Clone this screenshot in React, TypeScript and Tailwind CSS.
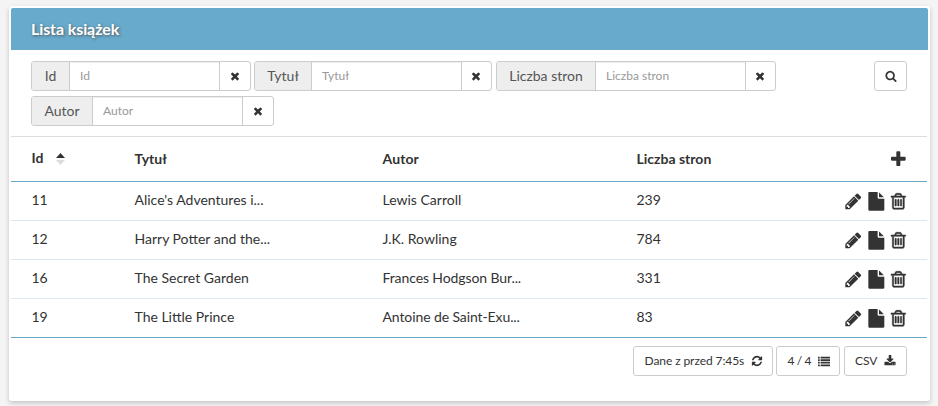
import React from "react";

const PATHS = {
  times:
    "M1490 1322q0 40-28 68l-136 136q-28 28-68 28t-68-28l-294-294-294 294q-28 28-68 28t-68-28l-136-136q-28-28-28-68t28-68l294-294-294-294q-28-28-28-68t28-68l136-136q28-28 68-28t68 28l294 294 294-294q28-28 68-28t68 28l136 136q28 28 28 68t-28 68l-294 294 294 294q28 28 28 68z",
  search:
    "M1216 832q0-185-131.5-316.5t-316.5-131.5-316.5 131.5-131.5 316.5 131.5 316.5 316.5 131.5 316.5-131.5 131.5-316.5zm512 832q0 52-38 90t-90 38q-54 0-90-38l-343-342q-179 124-399 124-143 0-273.5-55.5t-225-150-150-225-55.5-273.5 55.5-273.5 150-225 225-150 273.5-55.5 273.5 55.5 225 150 150 225 55.5 273.5q0 220-124 399l343 343q37 37 37 90z",
  plus: "M1600 736v192q0 40-28 68t-68 28h-416v416q0 40-28 68t-68 28h-192q-40 0-68-28t-28-68v-416h-416q-40 0-68-28t-28-68v-192q0-40 28-68t68-28h416v-416q0-40 28-68t68-28h192q40 0 68 28t28 68v416h416q40 0 68 28t28 68z",
  pencil:
    "M491 1536l91-91-235-235-91 91v107h128v128h107zm523-928q0-22-22-22-10 0-17 7l-542 542q-7 7-7 17 0 22 22 22 10 0 17-7l542-542q7-7 7-17zm-54-192l416 416-832 832h-416v-416zm683 96q0 53-37 90l-166 166-416-416 166-165q36-38 90-38 53 0 91 38l235 234q37 39 37 91z",
  file: "M1152 512v-472q22 14 36 28l408 408q14 14 28 36h-472zm-128 32q0 40 28 68t68 28h544v1056q0 40-28 68t-68 28h-1344q-40 0-68-28t-28-68v-1600q0-40 28-68t68-28h800v544z",
  trash:
    "M704 736v576q0 14-9 23t-23 9h-64q-14 0-23-9t-9-23v-576q0-14 9-23t23-9h64q14 0 23 9t9 23zm256 0v576q0 14-9 23t-23 9h-64q-14 0-23-9t-9-23v-576q0-14 9-23t23-9h64q14 0 23 9t9 23zm256 0v576q0 14-9 23t-23 9h-64q-14 0-23-9t-9-23v-576q0-14 9-23t23-9h64q14 0 23 9t9 23zm128 724v-948h-896v948q0 22 7 40.5t14.5 27 10.5 8.5h832q3 0 10.5-8.5t14.5-27 7-40.5zm-672-1076h448l-48-117q-7-9-17-11h-317q-10 2-17 11zm928 32v64q0 14-9 23t-23 9h-96v948q0 83-47 143.5t-113 60.5h-832q-66 0-113-58.5t-47-141.5v-952h-96q-14 0-23-9t-9-23v-64q0-14 9-23t23-9h309l70-167q15-37 54-63t79-26h320q40 0 79 26t54 63l70 167h309q14 0 23 9t9 23z",
  refresh:
    "M1639 1056q0 5-1 7-64 268-268 434.5t-478 166.5q-146 0-282.5-55t-243.5-157l-129 129q-19 19-45 19t-45-19-19-45v-448q0-26 19-45t45-19h448q26 0 45 19t19 45-19 45l-137 137q71 66 161 102t187 36q134 0 250-65t186-179q11-17 53-117 8-23 30-23h192q13 0 22.5 9.5t9.5 22.5zm25-800v448q0 26-19 45t-45 19h-448q-26 0-45-19t-19-45 19-45l138-138q-148-137-349-137-134 0-250 65t-186 179q-11 17-53 117-8 23-30 23h-199q-13 0-22.5-9.5t-9.5-22.5v-7q65-268 270-434.5t480-166.5q146 0 284 55.5t245 156.5l130-129q19-19 45-19t45 19 19 45z",
  list: "M0 256h256v256h-256zM384 256h1408v256h-1408zM0 640h256v256h-256zM384 640h1408v256h-1408zM0 1024h256v256h-256zM384 1024h1408v256h-1408zM0 1408h256v256h-256zM384 1408h1408v256h-1408z",
  download:
    "M1344 1344q0-26-19-45t-45-19-45 19-19 45 19 45 45 19 45-19 19-45zm256 0q0-26-19-45t-45-19-45 19-19 45 19 45 45 19 45-19 19-45zm128-224v320q0 40-28 68t-68 28h-1472q-40 0-68-28t-28-68v-320q0-40 28-68t68-28h465l135 136q58 56 136 56t136-56l136-136h464q40 0 68 28t28 68zm-325-569q17 41-14 70l-448 448q-18 19-45 19t-45-19l-448-448q-31-29-14-70 17-39 59-39h256v-448q0-26 19-45t45-19h256q26 0 45 19t19 45v448h256q42 0 59 39z",
};

function Icon({ name, className }: { name: keyof typeof PATHS; className: string }) {
  return (
    <svg viewBox="0 0 1792 1792" fill="currentColor" className={`shrink-0 overflow-visible ${className}`}>
      <path d={PATHS[name]} />
    </svg>
  );
}

function Filter({ label, className, clearWidth }: { label: string; className: string; clearWidth: string }) {
  return (
    <div className={`flex h-[30px] rounded-[3px] border border-[#ccc] ${className}`}>
      <span className="flex flex-1 items-center justify-center rounded-l-[2px] bg-[#eee] text-sm text-[#555]">
        {label}
      </span>
      <input
        placeholder={label}
        className="w-[151px] border-x border-[#ccc] px-[10px] text-xs text-[#555] shadow-[inset_0_1px_1px_rgba(0,0,0,0.075)] outline-none placeholder:text-[#999]"
      />
      <button className={`flex items-center justify-center ${clearWidth}`}>
        <Icon name="times" className="mr-px size-3" />
      </button>
    </div>
  );
}

function Button({ children, className }: { children: React.ReactNode; className: string }) {
  return (
    <button
      className={`flex h-[30px] items-center rounded-[3px] border border-[#ccc] text-xs ${className}`}
    >
      {children}
    </button>
  );
}

const BOOKS = [
  ["11", "Alice's Adventures i...", "Lewis Carroll", "239"],
  ["12", "Harry Potter and the...", "J.K. Rowling", "784"],
  ["16", "The Secret Garden", "Frances Hodgson Bur...", "331"],
  ["19", "The Little Prince", "Antoine de Saint-Exu...", "83"],
];

const COLUMNS = "grid grid-cols-[103px_248px_254px_1fr_auto] items-center pl-[20.5px] pr-[19px]";

export default function App() {
  return (
    <div className="h-[406px] w-[938px] overflow-hidden bg-[#f4f4f4] pl-[9px] pt-[6px] font-['Lato',sans-serif] text-sm text-[#333]">
      <div className="h-[395px] w-[921px] rounded-[3px] border-2 border-white bg-white shadow-[0_2px_5px_rgba(0,0,0,0.2)]">
        <header className="flex h-[42px] items-center rounded-t-[2px] bg-[#67aacc] pl-5 text-base font-bold tracking-[-0.1px] text-white [text-shadow:1px_1px_3px_#555]">
          Lista książek
        </header>
        <div className="mr-px flex h-[87px] justify-between border-b border-[#ddd] pl-5 pr-[20px] pt-[11px]">
          <div className="flex w-[760px] flex-wrap content-start gap-y-[5px]">
            <Filter label="Id" className="mr-[3px] w-[220px]" clearWidth="w-[30px]" />
            <Filter label="Tytuł" className="mr-1 w-[238px]" clearWidth="w-[29px]" />
            <Filter label="Liczba stron" className="w-[280px]" clearWidth="w-[29px]" />
            <Filter label="Autor" className="w-[243px]" clearWidth="w-[30px]" />
          </div>
          <Button className="w-[33px] justify-center">
            <Icon name="search" className="size-3" />
          </Button>
        </div>
        <div className="mr-px">
          <div className={`${COLUMNS} h-[45px] border-b border-[#67a9c4] font-bold`}>
            <span className="flex items-center pb-0.5">
              Id
              <svg viewBox="0 0 9 12" className="ml-[13px] mt-0.5 h-3 w-[9px]">
                <path d="M0 5 4.5 0 9 5z" fill="#333" />
                <path d="M0 7h9l-4.5 5z" fill="#ddd" />
              </svg>
            </span>
            <span>Tytuł</span>
            <span className="tracking-[0.1px]">Autor</span>
            <span>Liczba stron</span>
            <Icon name="plus" className="size-[18.67px]" />
          </div>
          {BOOKS.map(([id, title, author, pages], i) => (
            <div
              key={id}
              className={`${COLUMNS} h-[39px] border-b ${i === BOOKS.length - 1 ? "border-[#67a9c4]" : "border-[#d9e8f1]"}`}
            >
              <span className="pb-0.5">{id}</span>
              <span className="pb-0.5">{title}</span>
              <span className={`pb-0.5 ${i > 1 ? "tracking-[-0.1px]" : ""}`}>{author}</span>
              <span className="pb-0.5">{pages}</span>
              <span className="flex gap-1">
                <Icon name="pencil" className="size-[18.67px]" />
                <Icon name="file" className="size-[18.67px]" />
                <Icon name="trash" className="size-[18.67px] stroke-current [stroke-width:50]" />
              </span>
            </div>
          ))}
        </div>
        <footer className="flex justify-end pr-[21px] pt-2">
          <Button className="mr-[3px] w-[140px] justify-between pl-[10.5px] pr-[9.5px]">
            <span className="tracking-[-0.08px]">Dane z przed 7:45s</span>
            <Icon name="refresh" className="size-3" />
          </Button>
          <Button className="mr-1 w-[64px] justify-between pl-[10.5px] pr-[9.5px]">
            <span className="tracking-[-0.4px]">4 / 4</span>
            <Icon name="list" className="mb-px size-3" />
          </Button>
          <Button className="w-[63px] justify-between px-[10px]">
            CSV <Icon name="download" className="mb-px size-3" />
          </Button>
        </footer>
      </div>
    </div>
  );
}
